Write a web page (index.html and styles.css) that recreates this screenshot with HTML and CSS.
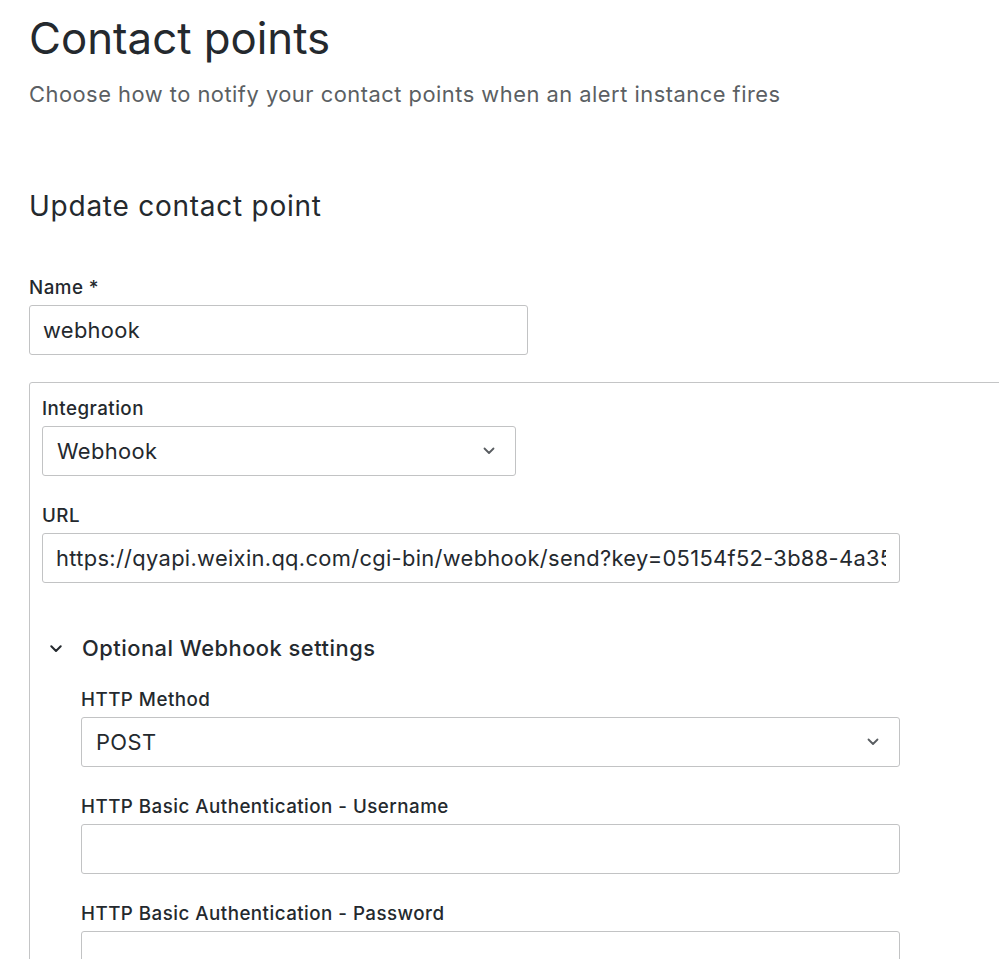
FILE: index.html
```html
<!DOCTYPE html>
<html lang="en">
<head>
<meta charset="utf-8">
<title>Contact points</title>
<link rel="stylesheet" href="styles.css">
</head>
<body>
<div class="page">
  <h1 class="title">Contact points</h1>
  <p class="subtitle">Choose how to notify your contact points when an alert instance fires</p>

  <h2 class="section-title">Update contact point</h2>

  <div class="field field-name">
    <label class="label">Name *</label>
    <input class="input input-name" type="text" value="webhook">
  </div>

  <div class="integration-box">
    <div class="field">
      <label class="label">Integration</label>
      <div class="select select-integration">
        <span class="select-value">Webhook</span>
        <svg class="select-chevron" width="12" height="8" viewBox="0 0 12 8"><path d="M1.5 1.5 L6 6 L10.5 1.5" fill="none" stroke="#595d61" stroke-width="1.8" stroke-linecap="round" stroke-linejoin="round"/></svg>
      </div>
    </div>

    <div class="field">
      <label class="label">URL</label>
      <input class="input input-url" type="text" value="https://qyapi.weixin.qq.com/cgi-bin/webhook/send?key=05154f52-3b88-4a35-9c1d-6e2f70b4a812">
    </div>

    <div class="collapse-header">
      <svg class="collapse-chevron" width="12" height="8" viewBox="0 0 12 8"><path d="M1.3 1.3 L6 6 L10.7 1.3" fill="none" stroke="#24292e" stroke-width="2" stroke-linecap="round" stroke-linejoin="round"/></svg>
      <span class="collapse-title">Optional Webhook settings</span>
    </div>

    <div class="collapse-body">
      <div class="field">
        <label class="label">HTTP Method</label>
        <div class="select select-wide">
          <span class="select-value">POST</span>
          <svg class="select-chevron" width="12" height="8" viewBox="0 0 12 8"><path d="M1.5 1.5 L6 6 L10.5 1.5" fill="none" stroke="#595d61" stroke-width="1.8" stroke-linecap="round" stroke-linejoin="round"/></svg>
        </div>
      </div>

      <div class="field">
        <label class="label">HTTP Basic Authentication - Username</label>
        <input class="input input-wide" type="text" value="">
      </div>

      <div class="field">
        <label class="label">HTTP Basic Authentication - Password</label>
        <input class="input input-wide" type="password" value="">
      </div>
    </div>
  </div>
</div>
</body>
</html>
```

FILE: styles.css
```css
html {
  overflow: hidden;
  background: #ffffff;
}

body {
  margin: 0;
  font-family: Inter, "Noto Sans", "Liberation Sans", sans-serif;
  color: #24292e;
  background: #ffffff;
}

.page {
  padding: 12px 0 0 29px;
}

.title {
  margin: 0;
  font-size: 43.75px;
  line-height: 53px;
  font-weight: 400;
  letter-spacing: 0;
}

.subtitle {
  margin: 13px 0 0;
  font-size: 21.875px;
  line-height: 33px;
  letter-spacing: 0.5px;
  color: #5b5f63;
}

.section-title {
  margin: 78px 0 0;
  font-size: 28px;
  line-height: 34px;
  font-weight: 400;
  letter-spacing: 0.75px;
}

.field {
  margin-bottom: 26px;
}

.field-name {
  margin-top: 51px;
  margin-bottom: 27px;
}

.label {
  display: block;
  font-size: 18.75px;
  line-height: 27.5px;
  font-weight: 500;
  letter-spacing: 0.47px;
  margin-bottom: 3.5px;
  color: #24292e;
}

.input {
  display: block;
  box-sizing: border-box;
  height: 50px;
  padding: 0 13px;
  border: 1px solid #c2c3c4;
  border-radius: 3px;
  background: #ffffff;
  font-family: Inter, "Noto Sans", "Liberation Sans", sans-serif;
  font-size: 21.875px;
  letter-spacing: 0.33px;
  color: #24292e;
  outline: none;
  margin: 0;
}

.input-name {
  width: 499px;
}

.input-url {
  width: 858px;
}

.input-wide {
  width: 819px;
}

.integration-box {
  width: 1100px;
  box-sizing: border-box;
  border: 1px solid #c4c5c6;
  border-radius: 3px;
  padding: 12px 12px 0;
}

.select {
  box-sizing: border-box;
  height: 50px;
  display: flex;
  align-items: center;
  justify-content: space-between;
  padding: 0 20px 0 14px;
  border: 1px solid #c2c3c4;
  border-radius: 3px;
  font-size: 21.875px;
  letter-spacing: 0.4px;
  color: #24292e;
}

.select-integration {
  width: 474px;
}

.select-wide {
  width: 819px;
}

.select-chevron {
  display: block;
  flex: none;
}

.collapse-header {
  display: flex;
  align-items: center;
  padding: 23px 0 21px;
  height: 33px;
}

.collapse-chevron {
  display: block;
  flex: none;
  margin-left: 8px;
  margin-right: 20px;
}

.collapse-title {
  font-size: 21.875px;
  line-height: 33px;
  font-weight: 500;
  letter-spacing: 0.5px;
}

.collapse-body {
  padding-left: 39px;
}
```
